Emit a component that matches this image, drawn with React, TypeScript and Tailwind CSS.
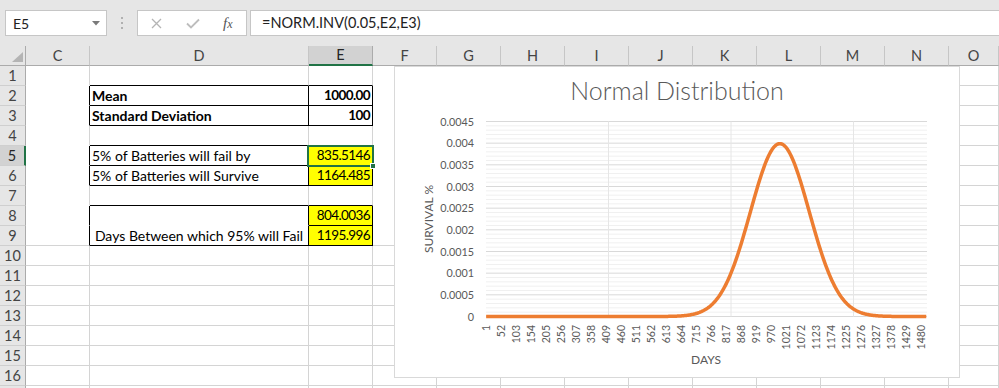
import React from "react";

// Excel-like sheet with a normal distribution chart
const COLS = ["C", "D", "E", "F", "G", "H", "I", "J", "K", "L", "M", "N", "O"];
const ROWS = Array.from({ length: 17 }, (_, i) => i + 1);

type Cell = { text: string; bold?: boolean; num?: boolean; align?: "left" | "right" | "center" };

const data: Record<string, Cell> = {
  "2-2": { text: "Mean", bold: true },
  "2-3": { text: "1000.00", bold: true, num: true, align: "right" },
  "3-2": { text: "Standard Deviation", bold: true },
  "3-3": { text: "100", bold: true, num: true, align: "right" },
  "5-2": { text: "5% of Batteries will fail by" },
  "5-3": { text: "835.5146", num: true, align: "right" },
  "6-2": { text: "5% of Batteries will Survive" },
  "6-3": { text: "1164.485", num: true, align: "right" },
  "8-3": { text: "804.0036", num: true, align: "right" },
  "9-2": { text: "Days Between which 95% will Fail", align: "center" },
  "9-3": { text: "1195.996", num: true, align: "right" },
};

const tableRows = [2, 3, 5, 6, 8, 9];

function cellClass(r: number, c: number) {
  // c: 1 = C, 2 = D, 3 = E, 4 = F ...
  let right = "border-r-[#d4d4d4]";
  let bottom = "border-b-[#d4d4d4]";
  if (c >= 1 && c <= 3 && tableRows.includes(r)) right = "border-r-black";
  if ((c === 2 || c === 3) && r <= 9 && r !== 8) bottom = "border-b-black";
  if (c === 3 && r === 8) bottom = "border-b-black";
  if (c === 2 && r === 8) bottom = "border-b-white";
  if ((c === 1 || c === 4) && r <= 8) bottom = "border-b-white";
  const yellow = c === 3 && [5, 6, 8, 9].includes(r) ? "bg-[#ffff00]" : "bg-white";
  return `${right} ${bottom} ${yellow}`;
}

// chart geometry (svg space)
const PX0 = 91;
const PX1 = 532;
const PY0 = 210.5;
const PH = 195;
const MAXV = 0.0045;
const yOf = (v: number) => PY0 - (v / MAXV) * PH;
const xOf = (k: number) => PX0 + ((k - 0.5) * (PX1 - PX0)) / 1500;

const pdf = (k: number) =>
  Math.exp(-((k - 1000) ** 2) / (2 * 100 * 100)) / (100 * Math.sqrt(2 * Math.PI));

const curve = (() => {
  const pts: string[] = [];
  for (let k = 1; k <= 1500; k += 3) {
    pts.push(`${xOf(k).toFixed(2)},${yOf(pdf(k)).toFixed(2)}`);
  }
  return "M" + pts.join(" L");
})();

const yTicks = ["0", "0.0005", "0.001", "0.0015", "0.002", "0.0025", "0.003", "0.0035", "0.004", "0.0045"];
const xTicks = Array.from({ length: 30 }, (_, i) => 1 + i * 51);

const Chart = () => (
  <div className="absolute left-[394px] top-[20px] w-[566px] h-[312px] bg-white border border-[#d9d9d9]">
    <div className="h-[39px] pt-[8px] text-center text-[25px] leading-[30px] font-light text-[#595959] font-['Lato',sans-serif]">
      Normal Distribution
    </div>
    <svg width="564" height="271" className="block font-['Lato',sans-serif]">
      {/* minor gridlines */}
      {Array.from({ length: 45 }, (_, i) => i + 1)
        .filter((i) => i % 5 !== 0)
        .map((i) => (
          <line key={"m" + i} x1={PX0} x2={PX1} y1={yOf(i * 0.0001)} y2={yOf(i * 0.0001)} stroke="#f0f0f0" strokeWidth="1" />
        ))}
      {yTicks.map((t, i) => (
        <g key={t}>
          <line x1={PX0} x2={PX1} y1={yOf(i * 0.0005)} y2={yOf(i * 0.0005)} stroke="#d9d9d9" strokeWidth="1" />
          <text x="79" y={yOf(i * 0.0005) + 4} textAnchor="end" fontSize="10.8" fill="#595959">
            {t}
          </text>
        </g>
      ))}
      {[213.5, 336, 458.5].map((x) => (
        <line key={x} x1={x} x2={x} y1={yOf(MAXV)} y2={PY0} stroke="#e6e6e6" strokeWidth="1" />
      ))}
      <path d={curve} fill="none" stroke="#ed7d31" strokeWidth="3.5" strokeLinejoin="round" />
      {xTicks.map((k) => (
        <text
          key={k}
          transform={`translate(${(xOf(k) + 3.8).toFixed(2)},219) rotate(-90)`}
          textAnchor="end"
          fontSize="10.5"
          fill="#595959"
        >
          {k}
        </text>
      ))}
      <text x="311" y="258" textAnchor="middle" fontSize="12" fill="#595959">
        DAYS
      </text>
      <text transform="translate(38,113) rotate(-90)" textAnchor="middle" fontSize="12" fill="#595959">
        SURVIVAL %
      </text>
    </svg>
  </div>
);

const FormulaBar = () => (
  <div className="h-[46px] bg-[#e6e6e6] flex items-start pt-[10px] pl-[5px] font-['Lato',sans-serif]">
    <div className="w-[102px] h-[26px] bg-white border border-[#c6c6c6] flex items-center justify-between pl-[7px] pr-[6px] text-[14px] text-[#222]">
      <span>E5</span>
      <svg width="8" height="5" viewBox="0 0 8 5">
        <path d="M0 0 L8 0 L4 4.5 Z" fill="#7a7a7a" />
      </svg>
    </div>
    <div className="w-[30px] h-[26px] flex flex-col items-center justify-center gap-[3px]">
      <span className="w-[2px] h-[2px] bg-[#b0b0b0]" />
      <span className="w-[2px] h-[2px] bg-[#b0b0b0]" />
      <span className="w-[2px] h-[2px] bg-[#b0b0b0]" />
    </div>
    <div className="w-[110px] h-[26px] bg-white border border-[#c6c6c6] flex items-center">
      <svg width="11" height="11" viewBox="0 0 11 11" className="ml-[13px]">
        <path d="M1 1 L10 10 M10 1 L1 10" stroke="#b4b4b4" strokeWidth="1.3" />
      </svg>
      <svg width="14" height="11" viewBox="0 0 14 11" className="ml-[24px]">
        <path d="M1 5.5 L5 9.5 L13 1.5" stroke="#bdbdbd" strokeWidth="1.8" fill="none" />
      </svg>
      <span className="ml-[23px] text-[15px] italic text-[#555] font-['Liberation_Serif',serif]">
        f<span className="text-[12px]">x</span>
      </span>
    </div>
    <div className="ml-[3px] flex-1 h-[26px] bg-white border border-[#c6c6c6] border-r-0 pl-[11px] flex items-center text-[14.5px] text-[#222]">
      =NORM.INV(0.05,E2,E3)
    </div>
  </div>
);

export default function App() {
  return (
    <div className="w-[999px] h-[388px] overflow-hidden bg-white font-['Lato',sans-serif] text-[14px] text-black">
      <FormulaBar />
      <div className="relative">
        <div className="grid grid-cols-[26px_64px_219px_64px_64px_64px_64px_64px_64px_64px_64px_64px_64px_1fr] auto-rows-[20px]">
          {/* header row */}
          <div className="bg-[#e6e6e6] border-r border-b border-[#ababab] relative">
            <svg width="26" height="20" className="absolute inset-0">
              <path d="M12 16 L23 16 L23 6 Z" fill="#b4b4b4" />
            </svg>
          </div>
          {COLS.map((c) =>
            c === "E" ? (
              <div
                key={c}
                className="bg-[#d2d2d2] border-r border-r-[#ababab] border-b-2 border-b-[#217346] flex items-center justify-center text-[#262626] text-[14.5px]"
              >
                {c}
              </div>
            ) : (
              <div
                key={c}
                className="bg-[#e6e6e6] border-r border-r-[#c6c6c6] border-b border-b-[#ababab] flex items-center justify-center text-[#444] text-[14.5px]"
              >
                {c}
              </div>
            )
          )}
          {ROWS.map((r) => (
            <React.Fragment key={r}>
              {r === 5 ? (
                <div className="bg-[#d2d2d2] border-r-2 border-r-[#217346] border-b border-b-[#cfcfcf] flex items-center justify-center text-[#262626] text-[14.5px]">
                  {r}
                </div>
              ) : (
                <div className="bg-[#e6e6e6] border-r border-r-[#ababab] border-b border-b-[#cfcfcf] flex items-center justify-center text-[#444] text-[14.5px]">
                  {r < 17 ? r : ""}
                </div>
              )}
              {COLS.map((_, i) => {
                const c = i + 1;
                const cell = data[`${r}-${c}`];
                return (
                  <div
                    key={c}
                    className={`border-r border-b leading-[19px] whitespace-nowrap overflow-visible px-[2px] ${cellClass(r, c)} ${
                      cell?.bold ? "font-bold" : ""
                    } ${cell?.num ? "text-[13.5px] tracking-[-0.6px]" : ""} ${
                      cell?.align === "right" ? "text-right" : cell?.align === "center" ? "text-center" : "text-left"
                    }`}
                  >
                    {cell?.text}
                  </div>
                );
              })}
            </React.Fragment>
          ))}
        </div>
        {/* active cell E5 */}
        <div className="absolute left-[307px] top-[99px] w-[67px] h-[22px] border-2 border-[#217346]" />
        <div className="absolute left-[370px] top-[117px] w-[6px] h-[6px] bg-[#217346] border border-white" />
        <Chart />
      </div>
    </div>
  );
}
